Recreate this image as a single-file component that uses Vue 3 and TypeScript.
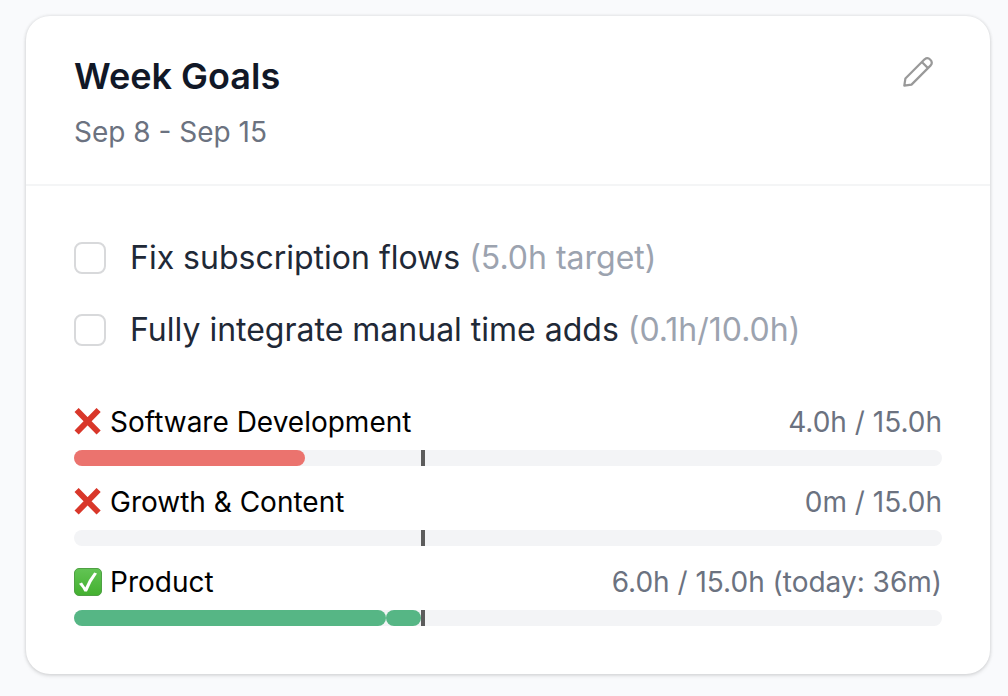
<script setup lang="ts">
import { ref } from 'vue'

interface Goal {
  id: string
  title: string
  note: string
  done: boolean
}

interface Category {
  id: string
  name: string
  onTrack: boolean
  summary: string
  target: number
  earlier: number
  today: number
}

const goals = ref<Goal[]>([
  { id: 'subscription', title: 'Fix subscription flows', note: '(5.0h target)', done: false },
  { id: 'manual-time', title: 'Fully integrate manual time adds', note: '(0.1h/10.0h)', done: false },
])

const categories: Category[] = [
  { id: 'software', name: 'Software Development', onTrack: false, summary: '4.0h / 15.0h', target: 15, earlier: 4, today: 0 },
  { id: 'growth', name: 'Growth & Content', onTrack: false, summary: '0m / 15.0h', target: 15, earlier: 0, today: 0 },
  { id: 'product', name: 'Product', onTrack: true, summary: '6.0h / 15.0h (today: 36m)', target: 15, earlier: 5.4, today: 0.6 },
]

const expected = 0.4

const percent = (part: number, whole: number): string => `${(part / whole) * 100}%`
</script>

<template>
  <main class="page">
    <section class="card" aria-labelledby="week-goals">
      <header class="head">
        <div class="heading">
          <h2 id="week-goals" class="title">Week Goals</h2>
          <p class="range">Sep 8 - Sep 15</p>
        </div>
        <button class="edit" type="button" aria-label="Edit goals">
          <svg viewBox="0 0 32 32" fill="none" stroke="currentColor" stroke-width="2.2" stroke-linecap="round" stroke-linejoin="round" aria-hidden="true">
            <path d="M3.4 22.5 22.6 3.3A4.35 4.35 0 0 1 28.7 9.4L9.5 28.6 2.3 29.7ZM19.9 6 26 12.1" />
          </svg>
        </button>
      </header>

      <div class="body">
        <ul class="goals">
          <li v-for="goal in goals" :key="goal.id" class="goal">
            <input :id="goal.id" v-model="goal.done" class="check" type="checkbox" />
            <label :for="goal.id">{{ goal.title }} <span class="note">{{ goal.note }}</span></label>
          </li>
        </ul>

        <ul class="categories">
          <li v-for="category in categories" :key="category.id" class="category">
            <div class="line">
              <span class="name">
                <svg v-if="category.onTrack" class="mark" viewBox="0 0 28 28" role="img" aria-label="On track">
                  <defs>
                    <linearGradient id="tick-fill" x1="0" y1="0" x2="0" y2="1">
                      <stop offset="0" stop-color="#62c454" />
                      <stop offset="1" stop-color="#43b02f" />
                    </linearGradient>
                  </defs>
                  <rect x="0.5" y="0.5" width="27" height="27" rx="4.5" fill="url(#tick-fill)" stroke="#4fa044" />
                  <path d="M5 15.8 8 14.4 11.3 19.4Q14.8 11.4 20.2 4.6L23 5.6Q16.6 14 13 23.6H10.4Q8.4 19.4 5 15.8Z" fill="#fff" />
                </svg>
                <svg v-else class="mark" viewBox="0 0 28 28" role="img" aria-label="Behind">
                  <path d="M2.6 2 24.6 24.6M24.6 2 2.6 24.6" fill="none" stroke="#d9372a" stroke-width="5.8" />
                </svg>
                {{ category.name }}
              </span>
              <span class="summary">{{ category.summary }}</span>
            </div>
            <div class="track">
              <div class="fill" :class="{ good: category.onTrack }" :style="{ width: percent(category.earlier, category.target) }"></div>
              <div class="fill" :class="{ good: category.onTrack }" :style="{ width: percent(category.today, category.target) }"></div>
              <div class="marker" :style="{ left: percent(expected, 1) }"></div>
            </div>
          </li>
        </ul>
      </div>
    </section>
  </main>
</template>

<style>
body {
  margin: 0;
  background: #f9fafc;
}
</style>

<style scoped>
.page {
  padding: 16px 18px 22px 26px;
  font-family: Inter, 'Liberation Sans', sans-serif;
}

.card {
  background: #fff;
  border-radius: 24px;
  box-shadow: 0 0 3px 1px rgb(0 0 0 / 8%), 0 2px 4px rgb(0 0 0 / 10%);
}

.head {
  display: flex;
  justify-content: space-between;
  align-items: flex-start;
  padding: 32px 48px;
  border-bottom: 2px solid #f4f5f6;
}

.heading {
  display: flex;
  flex-direction: column;
  gap: 8px;
}

.title {
  margin: 0;
  font-size: 36px;
  line-height: 56px;
  font-weight: 600;
  color: #111827;
}

.range {
  margin: 0;
  font-size: 28px;
  line-height: 40px;
  color: #6b7280;
}

.edit {
  display: flex;
  padding: 8px;
  border: 0;
  background: none;
  color: #999;
  cursor: pointer;
}

.edit svg {
  width: 32px;
  height: 32px;
}

.body {
  display: flex;
  flex-direction: column;
  gap: 48px;
  padding: 48px;
}

.goals,
.categories {
  display: flex;
  flex-direction: column;
  margin: 0;
  padding: 0;
  list-style: none;
}

.goals {
  gap: 24px;
}

.goal {
  display: flex;
  align-items: center;
  gap: 24px;
  font-size: 32px;
  line-height: 48px;
  color: #1f2937;
}

.check {
  appearance: none;
  flex: none;
  width: 32px;
  height: 32px;
  margin: 0;
  border: 2px solid #d8d9db;
  border-radius: 8px;
  background: #fff;
}

.check:checked {
  background: #56b685;
}

.note {
  color: #9ca3af;
}

.categories {
  gap: 16px;
}

.category {
  display: flex;
  flex-direction: column;
  gap: 8px;
}

.line {
  display: flex;
  justify-content: space-between;
  font-size: 28px;
  line-height: 40px;
  color: #000;
}

.name {
  display: flex;
  align-items: center;
  gap: 8px;
}

.mark {
  width: 28px;
  height: 28px;
}

.summary {
  color: #6b7280;
}

.track {
  position: relative;
  display: flex;
  height: 16px;
  border-radius: 8px;
  background: #f3f4f6;
}

.fill {
  border-radius: 8px;
  background: #eb736e;
}

.fill.good {
  background: #56b685;
}

.marker {
  position: absolute;
  top: 0;
  width: 4px;
  height: 100%;
  background: #5c5c5c;
}
</style>
